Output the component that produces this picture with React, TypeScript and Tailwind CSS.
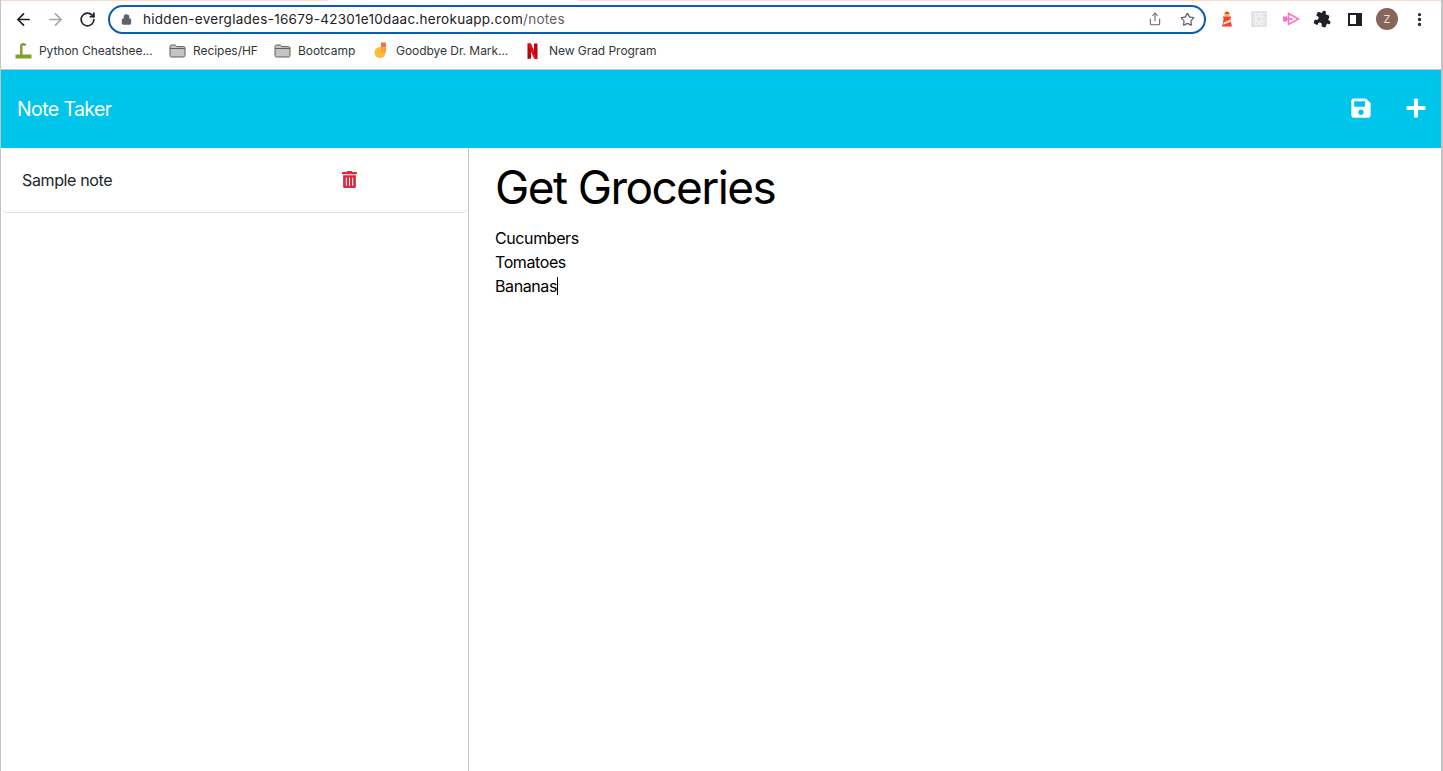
import React from 'react';
import { ArrowLeft, ArrowRight, RotateCw, Lock, Share, Star, EllipsisVertical } from 'lucide-react';
import { FaSave, FaPlus, FaTrashAlt } from 'react-icons/fa';
import { MdExtension } from 'react-icons/md';

const Folder = () => (
    <svg width="17" height="14" viewBox="0 0 17 14" className="shrink-0">
        <path d="M1 2.500C1 1.700 1.600 1 2.400 1h3.800l1.600 1.600h6.800c.8 0 1.400.6 1.400 1.400v7.500c0 .8-.6 1.500-1.400 1.500H2.400c-.8 0-1.400-.7-1.400-1.500z" fill="#c4c4c4" stroke="#5f5f5f" strokeWidth="1" />
        <path d="M1 4.500h15" stroke="#5f5f5f" strokeWidth="1" />
    </svg>
);

const PythonIcon = () => (
    <svg width="17" height="17" viewBox="0 0 17 17" className="shrink-0">
        <path d="M5 13V5c0-3 1-4 3-4s3 1 3 2.500H8.500C7.800 3.500 7.500 4 7.500 5v8z" fill="#8a9a3c" />
        <rect x="0.500" y="12.500" width="16" height="4" fill="#7fa32c" />
        <rect x="8" y="2" width="3" height="1" fill="#4f7f3f" />
    </svg>
);

const SlidesIcon = () => (
    <svg width="14" height="17" viewBox="0 0 14 17" className="shrink-0">
        <circle cx="6" cy="10.500" r="5.500" fill="#fbbc3c" />
        <rect x="7" y="0.500" width="5" height="5" fill="#f1743a" />
        <rect x="7" y="5.500" width="5" height="5" fill="#f9a03f" />
    </svg>
);

const NetflixIcon = () => (
    <svg width="11" height="16" viewBox="0 0 11 16" className="shrink-0">
        <path d="M0.500 0.500h3.500v15l-3.500.500z" fill="#b20710" />
        <path d="M7 0.500h3.500V16L7 15.500z" fill="#b20710" />
        <path d="M0.500 0.500h3.500L10.500 16 7 15.500z" fill="#e50914" />
    </svg>
);

const LighthouseIcon = () => (
    <svg width="12" height="16" viewBox="0 0 12 16">
        <path d="M3.500 3.500C3.500 1.800 4.600.5 6 .5s2.500 1.300 2.500 3z" fill="#f4402f" />
        <rect x="3.500" y="3.500" width="5" height="2" fill="#fbc02d" />
        <rect x="2" y="5.500" width="8" height="1.500" fill="#f4402f" />
        <path d="M2.800 7h6.400L11 15.500H1z" fill="#f4402f" />
        <path d="M2.500 11.500 9.300 8.500l.4 2.500-7.500 2.800z" fill="#fde0c8" />
    </svg>
);

const AtomIcon = () => (
    <div className="w-4 h-4 bg-[#e4e4e4] flex items-center justify-center">
        <svg width="14" height="14" viewBox="0 0 14 14" fill="none" stroke="#f5f5f5" strokeWidth="1">
            <ellipse cx="7" cy="7" rx="6" ry="2.500" />
            <ellipse cx="7" cy="7" rx="6" ry="2.500" transform="rotate(60 7 7)" />
            <ellipse cx="7" cy="7" rx="6" ry="2.500" transform="rotate(120 7 7)" />
        </svg>
    </div>
);

const PinkIcon = () => (
    <svg width="17" height="14" viewBox="0 0 17 14">
        <rect x="0" y="4.500" width="4" height="5" fill="#ff6ec7" />
        <path d="M5.500 1.500 15.500 7l-10 5.500z" fill="none" stroke="#ff6ec7" strokeWidth="1.600" />
        <path d="M4 7h6" stroke="#ff6ec7" strokeWidth="1.600" />
    </svg>
);

const bookmarks = [
    { icon: <PythonIcon />, label: 'Python Cheatshee...', gap: 'gap-[7px]', width: 'w-[154px]' },
    { icon: <Folder />, label: 'Recipes/HF', gap: 'gap-[7px]', width: 'w-[105px]' },
    { icon: <Folder />, label: 'Bootcamp', gap: 'gap-[7px]', width: 'w-[100px]' },
    { icon: <SlidesIcon />, label: 'Goodbye Dr. Mark...', gap: 'gap-[8px]', width: 'w-[153px]' },
    { icon: <NetflixIcon />, label: 'New Grad Program', gap: 'gap-[11px]', width: 'w-auto' },
];

const BrowserChrome: React.FC = () => (
    <div className="bg-white font-['Inter',sans-serif]">
        <div className="h-px flex">
            <div className="w-[327px] bg-[#fcd9cf]" />
            <div className="w-[251px] bg-white" />
            <div className="flex-1 bg-[#fcd9cf]" />
        </div>
        <div className="h-[34px] flex items-center pl-[13px] pt-[2px]">
            <ArrowLeft size={19} strokeWidth={2.2} color="#202124" />
            <ArrowRight size={19} strokeWidth={2.2} color="#a5a7aa" className="ml-[13px]" />
            <RotateCw size={17} strokeWidth={2.4} color="#202124" className="ml-[14px]" />
            <div className="ml-[12px] w-[1098px] h-[29px] border-2 border-[#0b5cb5] rounded-full flex items-center pl-[11px] pr-[9px]">
                <Lock size={11} fill="#5f6368" color="#5f6368" strokeWidth={2.5} />
                <span className="ml-[11px] pt-[2px] text-[13.5px] tracking-[0.28px] leading-none text-[#202124]">
                    hidden-everglades-16679-42301e10daac.herokuapp.com<span className="text-[#5f6368]">/notes</span>
                </span>
                <div className="ml-auto flex items-center gap-[18px]">
                    <Share size={14} color="#5f6368" strokeWidth={1.8} />
                    <Star size={15} color="#5f6368" strokeWidth={2} />
                </div>
            </div>
            <div className="ml-[13px] flex items-center">
                <div className="w-[16px] flex justify-center"><LighthouseIcon /></div>
                <div className="ml-[16px]"><AtomIcon /></div>
                <div className="ml-[16px]"><PinkIcon /></div>
                <MdExtension size={18} color="#202124" className="ml-[14px] rotate-[20deg]" />
                <div className="ml-[16px] w-[14px] h-[13px] border-2 border-[#202124] flex justify-end">
                    <div className="w-1 bg-[#202124]" />
                </div>
                <div className="ml-[14px] w-[22px] h-[22px] rounded-full bg-[#86655c] text-[#e8e0dc] text-[11px] flex items-center justify-center">Z</div>
                <EllipsisVertical size={17} color="#202124" strokeWidth={2.6} className="ml-[13px]" />
            </div>
        </div>
        <div className="h-[35px] pb-[3px] flex items-center pl-[14px] text-[12px] tracking-[-0.05px] text-[#333639] border-b border-[#c4c4c4]">
            {bookmarks.map((b) => (
                <div key={b.label} className={`flex items-center ${b.gap} ${b.width} shrink-0`}>
                    {b.icon}
                    <span className="whitespace-nowrap">{b.label}</span>
                </div>
            ))}
        </div>
    </div>
);

const App: React.FC = () => {
    return (
        <div className="relative h-[771px] overflow-hidden flex flex-col bg-white border-l border-r-2 border-[#c4c4c4]">
            <BrowserChrome />

            {/* Navbar */}
            <div className="h-[78px] shrink-0 bg-[#00c5eb] flex items-start justify-between pl-4 pr-[14px] pt-[26px] text-white font-['Inter',sans-serif]">
                <span className="text-[19.5px] leading-[26px] tracking-[-0.6px]">Note Taker</span>
                <div className="flex items-center gap-[33px] h-6">
                    <FaSave size={22} color="#fff" />
                    <FaPlus size={22} color="#fff" />
                </div>
            </div>

            <div className="flex-1 flex font-['Inter',sans-serif]">
                {/* Sidebar */}
                <div className="w-[468px] shrink-0 border-r border-[#c8c8c8]">
                    <div className="h-[65px] border-b border-[#dedede] rounded-b-[6px] flex items-center pl-[21px] text-[16px] text-[#212529] relative">
                        <span className="tracking-[-0.37px]">Sample note</span>
                        <FaTrashAlt size={17} color="#dc2740" className="absolute left-[340px] top-[23px]" />
                    </div>
                </div>

                {/* Note */}
                <div className="flex-1 pl-[26px] pt-[11px] text-black">
                    <h1 className="text-[46px] leading-[56px] tracking-[-1.6px] font-normal">Get Groceries</h1>
                    <div className="mt-[11px] text-[16px] leading-6 tracking-[-0.4px]">
                        <div>Cucumbers</div>
                        <div>Tomatoes</div>
                        <div className="flex items-center">Bananas<span className="w-px h-[18px] bg-black" /></div>
                    </div>
                </div>
            </div>

            {/* desktop showing through at the window corner */}
            <div className="absolute top-0 right-[-2px] w-[2px] h-[45px] bg-[#b5693a]" />
        </div>
    );
};

export default App;
